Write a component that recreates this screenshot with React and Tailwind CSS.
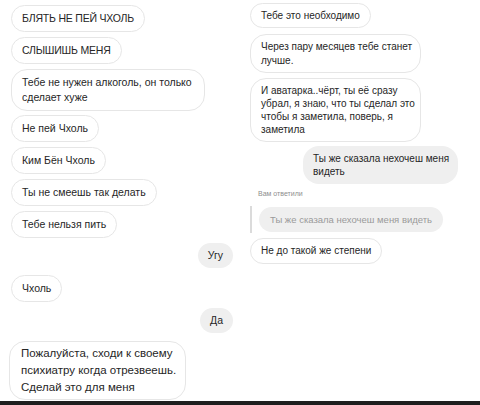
const font = { fontFamily: '"Liberation Sans", Arial, sans-serif' };

function Bubble({ children, grey = false, end = false, className = "" }) {
    return (
        <div
            className={`whitespace-nowrap rounded-[15px] px-[10px] text-[#262626] ${end ? "self-end" : "self-start"} ${
                grey ? "bg-[#efefef]" : "border border-[#e6e6e6] bg-white"
            } ${className}`}
        >
            {children}
        </div>
    );
}

function LeftColumn() {
    return (
        <div className="flex w-[240px] flex-col pl-[11px] pr-[7px] pt-[5px] text-[10.5px] leading-[15px]">
            <Bubble className="py-[5px] tracking-[-0.2px]">БЛЯТЬ НЕ ПЕЙ ЧХОЛЬ</Bubble>
            <Bubble className="mt-[5px] py-[5px] tracking-[-0.2px]">СЛЫШИШЬ МЕНЯ</Bubble>
            <Bubble className="mt-[5px] rounded-[16px] py-[5px] pr-[12px]">
                Тебе не нужен алкоголь, он только
                <br />
                сделает хуже
            </Bubble>
            <Bubble className="mt-[4px] py-[5px]">Не пей Чхоль</Bubble>
            <Bubble className="mt-[5px] py-[5px]">Ким Бён Чхоль</Bubble>
            <Bubble className="mt-[5px] py-[5px]">Ты не смеешь так делать</Bubble>
            <Bubble className="mt-[5px] py-[5px]">Тебе нельзя пить</Bubble>
            <Bubble grey end className="mt-[5px] py-[5px]">
                Угу
            </Bubble>
            <Bubble className="mt-[7px] py-[5px]">Чхоль</Bubble>
            <Bubble grey end className="mt-[6px] py-[5px]">
                Да
            </Bubble>
            <div className="-ml-[2px] mt-[8px] self-start whitespace-nowrap rounded-[16px] border border-[#e6e6e6] bg-white py-[3px] pl-[11px] pr-[9px] text-[11.5px] leading-[17px] text-[#262626]">
                Пожалуйста, сходи к своему
                <br />
                психиатру когда отрезвеешь.
                <br />
                Сделай это для меня
            </div>
        </div>
    );
}

function RightColumn() {
    return (
        <div className="flex w-[240px] flex-col pl-[10px] pr-[22px] pt-[3px] text-[10px]">
            <Bubble className="py-[4px] leading-[15px]">Тебе это необходимо</Bubble>
            <Bubble className="mt-[6px] w-[171px] rounded-[16px] py-[5px] leading-[13.5px]">
                Через пару месяцев тебе станет
                <br />
                лучше.
            </Bubble>
            <Bubble className="mt-[5px] w-[171px] rounded-[16px] py-[5px] leading-[13px]">
                И аватарка..чёрт, ты её сразу
                <br />
                убрал, я знаю, что ты сделал это
                <br />
                чтобы я заметила, поверь, я
                <br />
                заметила
            </Bubble>
            <Bubble grey end className="mt-[4px] w-[155px] rounded-[16px] py-[6px] leading-[13px]">
                Ты же сказала нехочеш меня
                <br />
                видеть
            </Bubble>
            <div className="ml-[8px] mt-[5px] text-[7px] leading-[9px] text-[#8e8e8e]">Вам ответили</div>
            <div className="mt-[8px] flex items-center gap-[7px]">
                <div className="h-[27px] w-[2px] bg-[#dbdbdb]" />
                <div className="whitespace-nowrap rounded-[13px] bg-[#efefef] px-[11px] py-[6px] text-[9.5px] leading-[13px] text-[#9a9a9a]">
                    Ты же сказала нехочеш меня видеть
                </div>
            </div>
            <Bubble className="mt-[5px] py-[5px] leading-[14px]">Не до такой же степени</Bubble>
        </div>
    );
}

export default function App() {
    return (
        <div className="flex h-[405px] w-[480px] flex-col overflow-hidden bg-white" style={font}>
            <div className="flex flex-1">
                <LeftColumn />
                <RightColumn />
            </div>
            <div className="h-[4px] shrink-0 bg-[#1e1e1e]" />
        </div>
    );
}
